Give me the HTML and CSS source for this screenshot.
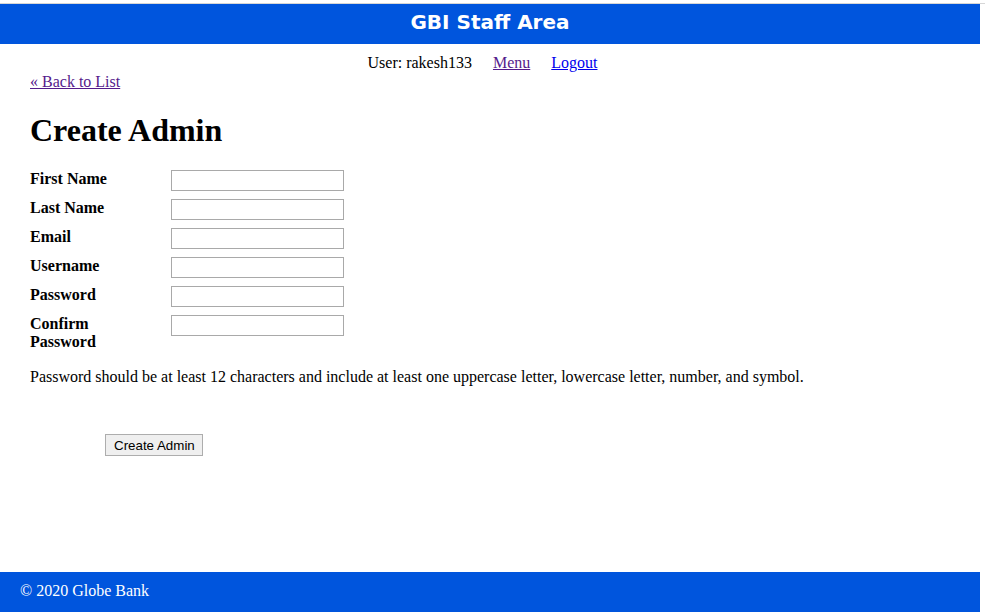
FILE: index.html
```html
<!DOCTYPE html>
<html lang="en">
<head>
<meta charset="utf-8">
<title>GBI Staff Area - Create Admin</title>
<link rel="stylesheet" href="styles.css">
</head>
<body>
<div class="topline"></div>
<header class="site-header">
  <h1 class="site-title">GBI Staff Area</h1>
</header>
<nav class="user-nav">
  <span>User: rakesh133</span>
  <a href="#" class="visited">Menu</a>
  <a href="#">Logout</a>
</nav>
<main class="content">
  <a href="#" class="visited back-link">&laquo; Back to List</a>
  <h1 class="page-title">Create Admin</h1>
  <form class="admin-form">
    <div class="form-row">
      <label class="form-label">First Name</label>
      <input class="form-input" type="text">
    </div>
    <div class="form-row">
      <label class="form-label">Last Name</label>
      <input class="form-input" type="text">
    </div>
    <div class="form-row">
      <label class="form-label">Email</label>
      <input class="form-input" type="text">
    </div>
    <div class="form-row">
      <label class="form-label">Username</label>
      <input class="form-input" type="text">
    </div>
    <div class="form-row">
      <label class="form-label">Password</label>
      <input class="form-input" type="password">
    </div>
    <div class="form-row">
      <label class="form-label">Confirm Password</label>
      <input class="form-input" type="password">
    </div>
    <p class="hint">Password should be at least 12 characters and include at least one uppercase letter, lowercase letter, number, and symbol.</p>
    <div class="operations">
      <button type="button" class="submit-btn">Create Admin</button>
    </div>
  </form>
</main>
<footer class="site-footer">&copy; 2020 Globe Bank</footer>
</body>
</html>
```
FILE: styles.css
```css
html, body {
  margin: 0;
  padding: 0;
  background: #ffffff;
}

body {
  font-family: "Liberation Serif", "Times New Roman", serif;
  font-size: 16px;
  color: #000;
  min-height: 616px;
  display: flex;
  flex-direction: column;
}

.topline {
  height: 3px;
  width: 985px;
  border-bottom: 1px solid #d6d6d6;
}

.site-header {
  width: 980px;
  height: 40px;
  background: #0055dd;
  box-sizing: border-box;
  padding-bottom: 4px;
}

.site-title {
  margin: 0;
  text-align: center;
  font-family: "DejaVu Sans", Verdana, sans-serif;
  font-weight: bold;
  font-size: 20px;
  line-height: 36px;
  color: #ffffff;
}

.user-nav {
  width: 980px;
  box-sizing: border-box;
  margin-top: 10px;
  padding-right: 15px;
  display: flex;
  justify-content: center;
  gap: 21px;
}

a {
  color: #0000ee;
}

a.visited {
  color: #551a8b;
}

.content {
  flex: 1;
  padding-left: 30px;
  padding-top: 1px;
}

.back-link {
  display: inline-block;
}

.page-title {
  font-size: 32px;
  font-weight: bold;
  margin: 21px 0 21px;
}

.admin-form {
  margin: 0;
}

.form-row {
  display: flex;
  align-items: flex-start;
  margin-bottom: 8px;
}

.form-label {
  width: 110px;
  margin-right: 31px;
  font-weight: bold;
}

.form-input {
  box-sizing: border-box;
  width: 173px;
  height: 21px;
  border: 1px solid #a9a9a9;
  padding: 1px 2px;
  margin: 0;
  font-family: "Liberation Sans", Arial, sans-serif;
  font-size: 13px;
  background: #fff;
}

.form-row:last-of-type {
  margin-bottom: 0;
}

.hint {
  margin: 17px 0 16px;
}

.operations {
  padding-top: 32px;
  padding-left: 75px;
}

.submit-btn {
  box-sizing: border-box;
  height: 22px;
  padding: 0 7px 0 8px;
  margin: 0;
  border: 1px solid #adadad;
  border-radius: 0;
  background: #efefef;
  font-family: "Liberation Sans", Arial, sans-serif;
  font-size: 13.33px;
  color: #000;
}

.site-footer {
  width: 980px;
  height: 40px;
  box-sizing: border-box;
  background: #0055dd;
  color: #ffffff;
  padding: 0 0 2px 20px;
  line-height: 38px;
  margin-bottom: 4px;
}
```
